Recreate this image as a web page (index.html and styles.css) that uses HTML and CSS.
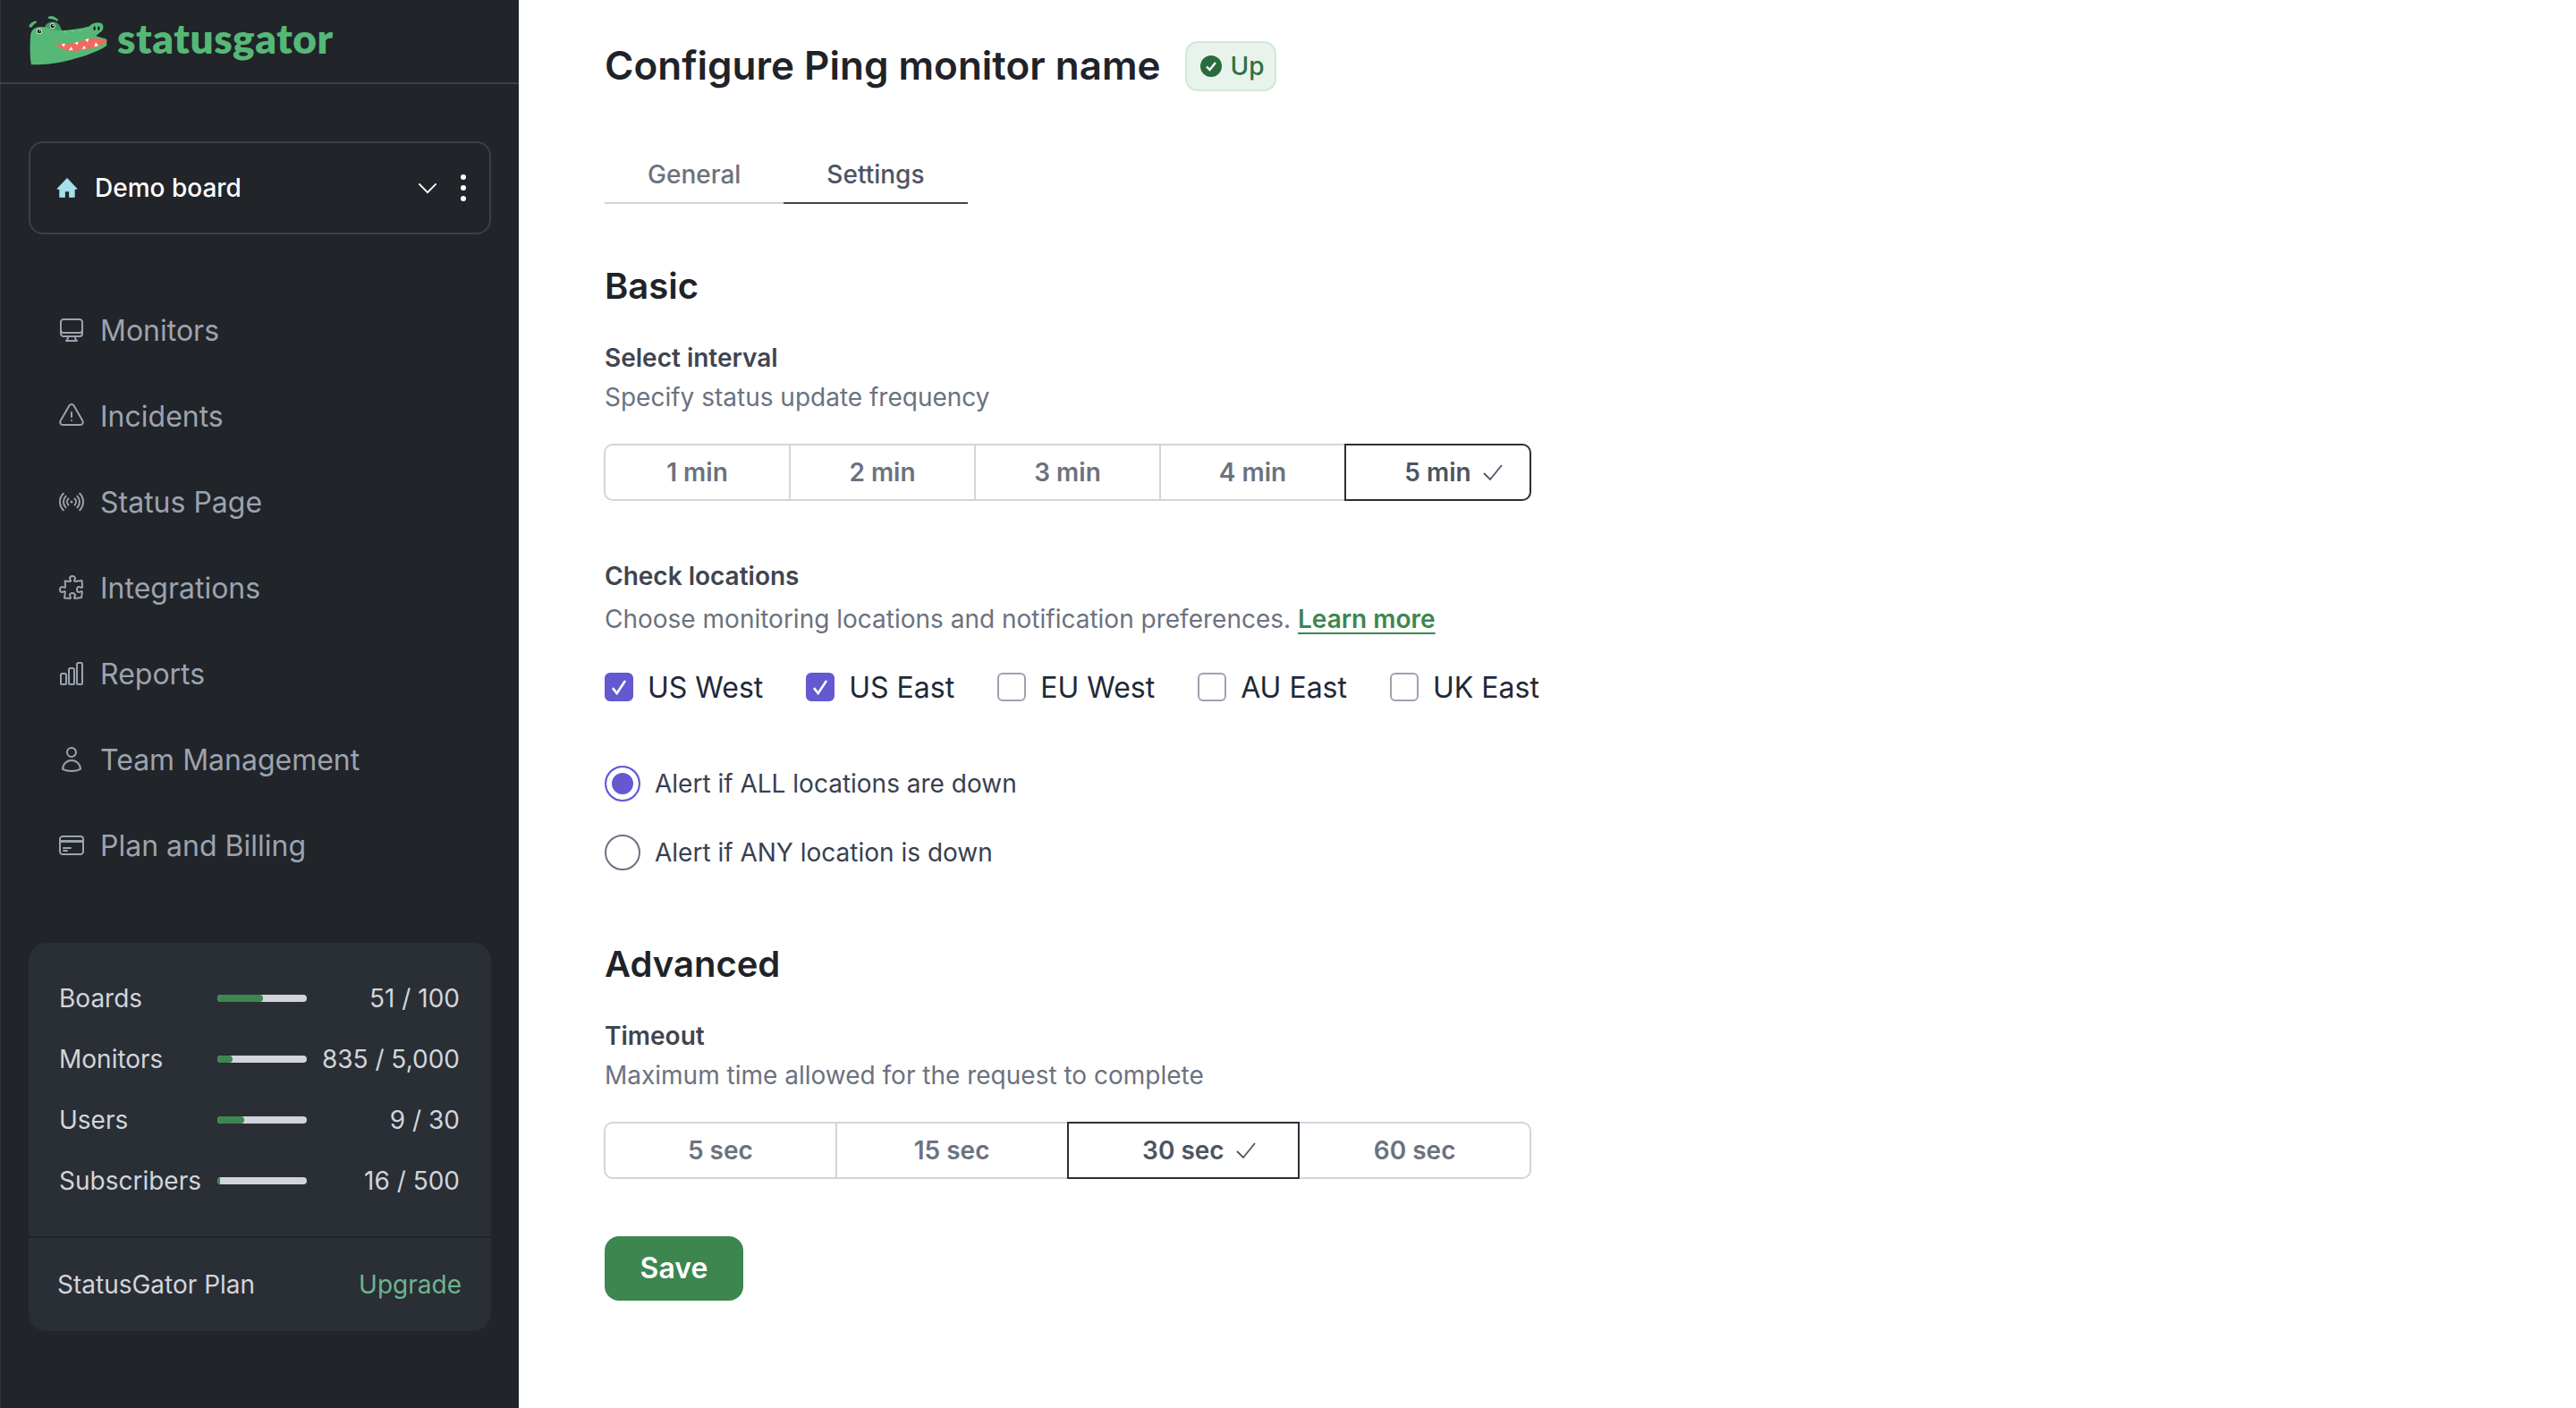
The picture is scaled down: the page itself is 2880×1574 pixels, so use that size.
FILE: index.html
```html
<!DOCTYPE html>
<html lang="en">
<head>
<meta charset="utf-8">
<title>Configure Ping monitor name</title>
<link rel="stylesheet" href="styles.css">
</head>
<body>
<div class="app">
  <aside class="sidebar">
    <div class="brand">
      <svg class="brand-mark" viewBox="0 0 276 186" width="92" height="62">
        <path class="g-dark" d="M60 50C60 36 75 27 90 28C105 30 113 42 118 60H60Z"/>
        <path class="g" d="M12 80C12 60 22 47 42 45C55 44 65 46 78 52C100 58 120 58 135 56C160 54 190 50 210 43C218 32 238 28 250 33C260 40 258 58 245 64L232 76L268 86V108C240 128 195 143 150 155C105 167 55 173 15 172C10 145 10 110 12 80Z"/>
        <path class="g-light" d="M125 58l7-1-1 8-5 1zM150 56l7-1-1 8-5 1zM176 54l6-1-1 8-5 1z"/>
        <path class="g" d="M7 42C11 33 20 27 31 25L34 30C26 34 20 40 17 46C13 48 8 47 7 42Z"/>
        <path class="g" d="M72 12C80 6 95 10 106 22L102 26C94 21 84 18 76 18C72 18 70 15 72 12Z"/>
        <circle class="eye-w" cx="42" cy="60" r="9"/><circle class="eye" cx="42" cy="60" r="7"/><circle class="eye-w" cx="44" cy="58" r="2.500"/>
        <circle class="eye-w" cx="86" cy="42" r="9"/><circle class="eye" cx="86" cy="42" r="7"/><circle class="eye-w" cx="88" cy="40" r="2.500"/>
        <ellipse class="eye" cx="227" cy="50" rx="3.500" ry="7"/><ellipse class="eye" cx="241" cy="50" rx="3.500" ry="7"/>
        <path class="mouth" d="M95 103C130 104 170 98 200 86C225 80 250 84 268 90C268 98 255 104 235 112C205 122 170 127 145 126C125 124 108 114 95 103Z"/>
        <path class="tooth" d="M116 103l13-1-5 11zM160 98l13-3-4 11zM195 88l13-4-4 13zM141 124l7-13 7 12zM185 120l7-12 6 10zM226 112l5-15 9 11z"/>
      </svg>
      <span class="brand-name">statusgator</span>
    </div>

    <div class="board">
      <svg class="home" viewBox="0 0 24 24"><path d="M12 2.500 22 13h-2.500v8.500H14.500V15.500h-5v6H4.500V13H2Z"/></svg>
      <span class="board-name">Demo board</span>
      <svg class="chev" viewBox="0 0 24 14"><path d="M1.500 1.500 12 12 22.500 1.500"/></svg>
      <span class="dots"><i></i><i></i><i></i></span>
    </div>

    <nav class="nav">
      <a class="nav-item"><svg viewBox="0 0 24 24"><path d="M9 17.250v1.007a3 3 0 01-.879 2.122L7.500 21h9l-.621-.621A3 3 0 0115 18.257V17.250m6-12V15a2.250 2.250 0 01-2.250 2.250H5.250A2.250 2.250 0 013 15V5.250m18 0A2.250 2.250 0 0018.750 3H5.250A2.250 2.250 0 003 5.250m18 0V12a2.250 2.250 0 01-2.250 2.250H5.250A2.250 2.250 0 013 12V5.250"/></svg>Monitors</a>
      <a class="nav-item"><svg viewBox="0 0 24 24"><path d="M12 9v3.750m-9.303 3.376c-.866 1.500.217 3.374 1.948 3.374h14.710c1.730 0 2.813-1.874 1.948-3.374L13.949 3.378c-.866-1.500-3.032-1.500-3.898 0L2.697 16.126zM12 15.750h.007v.008H12v-.008z"/></svg>Incidents</a>
      <a class="nav-item"><svg viewBox="0 0 24 24"><path d="M9.348 14.651a3.750 3.750 0 010-5.303m5.304 0a3.750 3.750 0 010 5.303m-7.425 2.122a6.750 6.750 0 010-9.546m9.546 0a6.750 6.750 0 010 9.546M5.106 18.894c-3.808-3.808-3.808-9.980 0-13.789m13.788 0c3.808 3.808 3.808 9.981 0 13.790M12 12h.008v.007H12V12zm.375 0a.375.375 0 11-.750 0 .375.375 0 01.750 0z"/></svg>Status Page</a>
      <a class="nav-item"><svg viewBox="0 0 24 24"><path d="M14.250 6.087c0-.355.186-.676.401-.959.221-.290.349-.634.349-1.003 0-1.036-1.007-1.875-2.250-1.875s-2.250.840-2.250 1.875c0 .369.128.713.349 1.003.215.283.401.604.401.959v0a.64.64 0 01-.657.643 48.390 48.390 0 01-4.163-.300c.186 1.613.293 3.250.315 4.907a.656.656 0 01-.658.663v0c-.355 0-.676-.186-.959-.401a1.647 1.647 0 00-1.003-.349c-1.036 0-1.875 1.007-1.875 2.250s.840 2.250 1.875 2.250c.369 0 .713-.128 1.003-.349.283-.215.604-.401.959-.401v0c.310 0 .555.260.532.570a48.039 48.039 0 01-.642 5.056c1.518.190 3.058.309 4.616.354a.64.64 0 00.657-.643v0c0-.355-.186-.676-.401-.959a1.647 1.647 0 01-.349-1.003c0-1.035 1.008-1.875 2.250-1.875 1.243 0 2.250.840 2.250 1.875 0 .369-.128.713-.349 1.003-.215.283-.400.604-.400.959v0c0 .333.277.599.610.580a48.100 48.100 0 005.427-.630 48.050 48.050 0 00.582-4.717.532.532 0 00-.533-.570v0c-.355 0-.676.186-.959.401-.290.221-.634.349-1.003.349-1.035 0-1.875-1.007-1.875-2.250s.840-2.250 1.875-2.250c.370 0 .713.128 1.003.349.283.215.604.401.960.401v0a.656.656 0 00.658-.663 48.422 48.422 0 00-.370-5.360c-1.886.342-3.810.574-5.766.689a.578.578 0 01-.610-.580v0z"/></svg>Integrations</a>
      <a class="nav-item"><svg viewBox="0 0 24 24"><path d="M3 13.125C3 12.504 3.504 12 4.125 12h2.250c.621 0 1.125.504 1.125 1.125v6.750C7.500 20.496 6.996 21 6.375 21h-2.250A1.125 1.125 0 013 19.875v-6.750zM9.750 8.625c0-.621.504-1.125 1.125-1.125h2.250c.621 0 1.125.504 1.125 1.125v11.250c0 .621-.504 1.125-1.125 1.125h-2.250a1.125 1.125 0 01-1.125-1.125V8.625zM16.500 4.125c0-.621.504-1.125 1.125-1.125h2.250C20.496 3 21 3.504 21 4.125v15.750c0 .621-.504 1.125-1.125 1.125h-2.250a1.125 1.125 0 01-1.125-1.125V4.125z"/></svg>Reports</a>
      <a class="nav-item"><svg viewBox="0 0 24 24"><path d="M15.750 6a3.750 3.750 0 11-7.500 0 3.750 3.750 0 017.500 0zM4.501 20.118a7.500 7.500 0 0114.998 0A17.933 17.933 0 0112 21.750c-2.676 0-5.216-.584-7.499-1.632z"/></svg>Team Management</a>
      <a class="nav-item"><svg viewBox="0 0 24 24"><path d="M2.250 8.250h19.500M2.250 9h19.500m-16.500 5.250h6m-6 2.250h3m-3.750 3h15a2.250 2.250 0 002.250-2.250V6.750A2.250 2.250 0 0019.500 4.500h-15a2.250 2.250 0 00-2.250 2.250v10.500A2.250 2.250 0 004.500 19.500z"/></svg>Plan and Billing</a>
    </nav>

    <section class="usage">
      <div class="usage-rows">
        <div class="usage-row"><span>Boards</span><span class="bar"><span class="fill" style="width:51%"></span></span><span class="val">51 / 100</span></div>
        <div class="usage-row"><span>Monitors</span><span class="bar"><span class="fill" style="width:17%"></span></span><span class="val">835 / 5,000</span></div>
        <div class="usage-row"><span>Users</span><span class="bar"><span class="fill" style="width:30%"></span></span><span class="val">9 / 30</span></div>
        <div class="usage-row"><span>Subscribers</span><span class="bar"><span class="fill" style="width:3%"></span></span><span class="val">16 / 500</span></div>
      </div>
      <div class="plan"><span>StatusGator Plan</span><a class="upgrade">Upgrade</a></div>
    </section>
  </aside>

  <main class="main">
    <header class="head">
      <h1 class="title">Configure Ping monitor name</h1>
      <span class="badge">
        <svg viewBox="0 0 24 24" width="24" height="24"><circle class="badge-dot" cx="12" cy="12" r="12"/><path class="badge-check" d="M7 12.500l3.500 3.500L17 8"/></svg>
        Up
      </span>
    </header>

    <div class="tabs">
      <a class="tab">General</a>
      <a class="tab tab-active">Settings</a>
    </div>

    <h2 class="section">Basic</h2>
    <div class="label">Select interval</div>
    <div class="desc">Specify status update frequency</div>
    <div class="seg">
      <span class="seg-item">1 min</span>
      <span class="seg-item">2 min</span>
      <span class="seg-item">3 min</span>
      <span class="seg-item">4 min</span>
      <span class="seg-item seg-on"><span class="seg-text">5 min<svg class="tick" viewBox="0 0 24 24"><path d="M2 13l7 7L22 4"/></svg></span></span>
    </div>

    <div class="label label-gap">Check locations</div>
    <div class="desc desc-tight">Choose monitoring locations and notification preferences. <a class="learn">Learn more</a></div>
    <div class="checks">
      <label class="check"><span class="box box-on"><svg viewBox="0 0 24 24"><path d="M6 13l4 5 8-12"/></svg></span>US West</label>
      <label class="check"><span class="box box-on"><svg viewBox="0 0 24 24"><path d="M6 13l4 5 8-12"/></svg></span>US East</label>
      <label class="check"><span class="box"></span>EU West</label>
      <label class="check"><span class="box"></span>AU East</label>
      <label class="check"><span class="box"></span>UK East</label>
    </div>

    <div class="radios">
      <label class="radio"><span class="dot dot-on"></span>Alert if ALL locations are down</label>
      <label class="radio"><span class="dot"></span>Alert if ANY location is down</label>
    </div>

    <h2 class="section section-adv">Advanced</h2>
    <div class="label">Timeout</div>
    <div class="desc">Maximum time allowed for the request to complete</div>
    <div class="seg">
      <span class="seg-item">5 sec</span>
      <span class="seg-item">15 sec</span>
      <span class="seg-item seg-on"><span class="seg-text">30 sec<svg class="tick" viewBox="0 0 24 24"><path d="M2 13l7 7L22 4"/></svg></span></span>
      <span class="seg-item">60 sec</span>
    </div>

    <button class="save" type="button">Save</button>
  </main>
</div>
</body>
</html>
```

FILE: styles.css
```css
* { box-sizing: border-box; }
html, body { margin: 0; height: 100%; }
body { font-family: Inter, "Liberation Sans", sans-serif; background: #fff; color: #1f2329; overflow: hidden; }

.app { display: flex; height: 1574px; }

/* Sidebar */
.sidebar { width: 580px; flex: none; background: #212429; border-left: 1px solid #33363b; display: flex; flex-direction: column; padding-bottom: 86px; }
.brand { height: 94px; border-bottom: 2px solid #3c3f44; display: flex; align-items: flex-start; margin-left: -1px; padding: 15px 0 0 30px; }
.brand-mark { flex: none; display: block; }
.brand-name { font-family: Lato, "Open Sans", sans-serif; font-weight: 800; font-size: 46px; line-height: 50px; color: #56b876; margin: 3px 0 0 9px; letter-spacing: .55px; }
.g { fill: #56b876; }
.g-dark { fill: #3f9a60; }
.g-light { fill: #6fc98d; }
.eye { fill: #15181b; }
.eye-w { fill: #fff; }
.mouth { fill: #f0695f; }
.tooth { fill: #fff; }

.board { margin: 64px 31px 0 31px; height: 104px; border: 2px solid #3c3f46; border-radius: 16px; display: flex; align-items: center; padding: 0 26px 0 28px; }
.home { width: 26px; height: 26px; flex: none; fill: #a6e0ea; stroke: #a6e0ea; stroke-width: 1; stroke-linejoin: round; }
.board-name { font-size: 28px; font-weight: 500; color: #fff; margin-left: 18px; flex: 1; }
.chev { width: 22px; height: 13px; fill: none; stroke: #fff; stroke-width: 2; flex: none; }
.dots { display: flex; flex-direction: column; gap: 6px; margin-left: 26px; width: 6px; }
.dots i { display: block; width: 6px; height: 6px; border-radius: 50%; background: #fff; }

.nav { margin-top: 59px; display: flex; flex-direction: column; }
.nav-item { height: 96px; padding-left: 63px; display: flex; align-items: center; gap: 16px; font-size: 32px; color: #9ca3af; }
.nav-item svg { width: 32px; height: 32px; flex: none; fill: none; stroke: #9ca3af; stroke-width: 1.5; stroke-linecap: round; stroke-linejoin: round; }

.usage { margin: 61px 31px 0 31px; height: 434px; background: #2a2e35; border-radius: 20px; display: flex; flex-direction: column; }
.usage-rows { padding: 28px 35px 28px 34px; border-bottom: 2px solid #212429; }
.usage-row { height: 68px; display: grid; grid-template-columns: 177px 100px 1fr; align-items: center; font-size: 28px; color: #d1d5db; }
.bar { height: 8px; border-radius: 4px; background: #d1d5db; overflow: hidden; display: block; }
.fill { display: block; height: 100%; border-radius: 4px; background: #3d8650; }
.val { text-align: right; }
.plan { flex: 1; padding: 0 33px 0 32px; display: flex; align-items: center; justify-content: space-between; font-size: 28px; color: #d1d5db; }
.upgrade { color: #6db58a; }

/* Main */
.main { flex: 1; padding-left: 96px; }
.head { height: 146px; display: flex; align-items: center; gap: 28px; }
.title { margin: 0; font-size: 44px; line-height: 56px; font-weight: 600; color: #1f2329; }
.badge { height: 56px; width: 102px; margin: 2px 0 0 -1px; border: 2px solid #d2e7da; background: #e8f3ec; border-radius: 14px; display: flex; align-items: center; gap: 10px; padding-left: 15px; font-size: 28px; font-weight: 500; color: #2f7043; }
.badge svg { flex: none; }
.badge-dot { fill: #2a6b3e; }
.badge-check { fill: none; stroke: #fff; stroke-width: 2.4; }

.tabs { margin-top: 18px; display: flex; width: 408px; }
.tab { height: 64px; padding: 0 48px; display: flex; align-items: center; font-size: 28px; font-weight: 500; color: #6b7280; border-bottom: 2px solid #d1d5db; }
.tab-active { color: #4b5563; border-bottom-color: #3f444c; }

.section { margin: 64px 0 0; font-size: 40px; line-height: 56px; font-weight: 600; color: #1f2329; }
.section-adv { margin-top: 77px; }
.label { margin-top: 30px; font-size: 28px; line-height: 44px; font-weight: 600; color: #40454f; }
.label-gap { margin-top: 62px; }
.desc { font-size: 28px; line-height: 44px; color: #6b7280; }
.desc-tight { margin-top: 4px; }
.learn { color: #3d8650; font-weight: 600; text-decoration: underline; text-underline-offset: 5px; text-decoration-thickness: 2px; }

.seg { margin: 30px 0 0 -1px; width: 1037px; height: 64px; display: flex; }
.seg-item { flex: 1; min-width: 0; margin-left: -2px; border: 2px solid #d1d5db; display: flex; align-items: center; justify-content: center; font-size: 28px; font-weight: 600; color: #6b7280; background: #fff; }
.seg-item:first-child { margin-left: 0; border-radius: 10px 0 0 10px; }
.seg-item:last-child { border-radius: 0 10px 10px 0; }
.seg-on { border-color: #2b2f36; color: #4b5563; position: relative; z-index: 1; }
.seg-text { position: relative; }
.tick { position: absolute; left: 100%; top: 5px; margin-left: 12px; width: 24px; height: 24px; fill: none; stroke: #4b5563; stroke-width: 1.8; }

.checks { margin-top: 30px; height: 48px; display: flex; align-items: center; gap: 48px; }
.check { display: flex; align-items: center; gap: 16px; font-size: 32px; color: #1f2937; }
.box { width: 32px; height: 32px; border-radius: 6px; border: 2px solid #9ca3af; background: #fff; display: block; flex: none; }
.box-on { background: #6459d1; border-color: #6459d1; }
.box-on svg { display: block; width: 28px; height: 28px; fill: none; stroke: #fff; stroke-width: 2.2; }

.radios { margin-top: 64px; display: flex; flex-direction: column; gap: 37px; }
.radio { height: 40px; display: flex; align-items: center; gap: 16px; font-size: 28px; color: #374151; }
.dot { width: 40px; height: 40px; border-radius: 50%; border: 2px solid #6b7280; background: #fff; flex: none; }
.dot-on { border-color: #6459d1; background: #6459d1; box-shadow: inset 0 0 0 6px #fff; }

.save { margin-top: 64px; width: 155px; height: 72px; padding: 0 0 2px; display: block; border: 0; border-radius: 16px; background: #3d8650; color: #fff; font: 600 32px Inter, sans-serif; }
```
